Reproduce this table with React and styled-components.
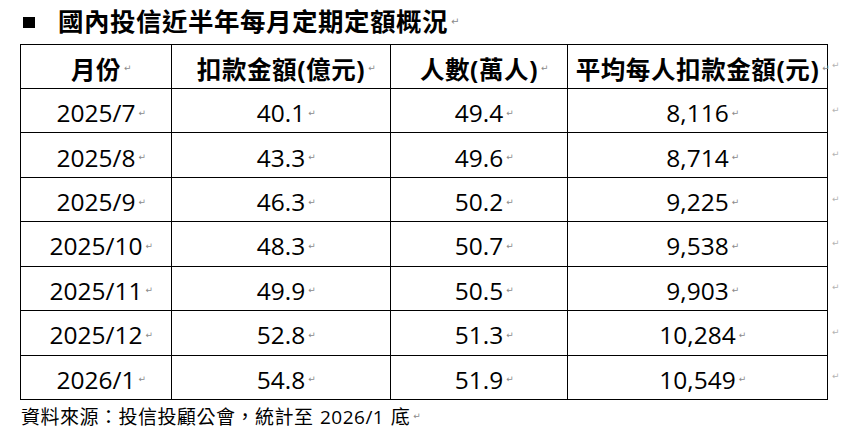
import React from 'react';
import styled, { createGlobalStyle } from 'styled-components';

const GlobalStyle = createGlobalStyle`
  html, body {
    margin: 0;
    padding: 0;
    background: #fff;
  }
  body {
    font-family: "Open Sans", "Noto Sans CJK TC", sans-serif;
    color: #000;
  }
`;

const Page = styled.div`
  width: 856px;
  height: 433px;
  overflow: hidden;
  background: #fff;
  display: flex;
  flex-direction: column;
`;

const Title = styled.h1`
  margin: 0;
  height: 44px;
  display: flex;
  align-items: center;
  padding-left: 23px;
  font-size: 25.5px;
  font-weight: 700;
  letter-spacing: 0.5px;
  line-height: 1;
`;

const Square = styled.span`
  width: 12px;
  height: 11px;
  background: #000;
  margin-right: 23px;
  flex: none;
`;

const Mark = styled.span`
  display: inline-block;
  font-family: "DejaVu Sans", sans-serif;
  font-size: ${(p) => p.$size || 9}px;
  font-weight: 400;
  letter-spacing: 0;
  color: ${(p) => (p.$light ? '#b4b4b4' : '#8a8a8a')};
  margin-left: 3px;
  width: 8px;
  margin-right: ${(p) => (p.$flow ? 0 : -11)}px;
`;

const Grid = styled.div`
  margin-left: 20px;
  display: grid;
  grid-template-columns: 152px 219px 177px 260px 28px;
  grid-template-rows: 45px repeat(7, 44.43px);
`;

const Cell = styled.div`
  box-sizing: border-box;
  display: flex;
  align-items: center;
  justify-content: center;
  padding-top: ${(p) => (p.$head ? 3 : 4)}px;
  border-right: 1px solid #000;
  border-bottom: 1px solid #000;
  border-left: ${(p) => (p.$first ? '1px solid #000' : 'none')};
  border-top: ${(p) => (p.$head ? '1px solid #000' : 'none')};
  font-size: 24.5px;
  font-weight: ${(p) => (p.$head ? 700 : 400)};
  letter-spacing: ${(p) => (p.$head ? '0.6px' : '0')};
  white-space: nowrap;
`;

const RowEnd = styled.div`
  display: flex;
  align-items: center;
  padding-left: 1px;
  padding-bottom: 3px;
`;

const Footer = styled.div`
  height: 33px;
  display: flex;
  align-items: center;
  padding-left: 21px;
  font-size: 19px;
  letter-spacing: 0.5px;
  word-spacing: 1px;
  white-space: pre;
`;

const headers = ['月份', '扣款金額(億元)', '人數(萬人)', '平均每人扣款金額(元)'];

const rows = [
  ['2025/7', '40.1', '49.4', '8,116'],
  ['2025/8', '43.3', '49.6', '8,714'],
  ['2025/9', '46.3', '50.2', '9,225'],
  ['2025/10', '48.3', '50.7', '9,538'],
  ['2025/11', '49.9', '50.5', '9,903'],
  ['2025/12', '52.8', '51.3', '10,284'],
  ['2026/1', '54.8', '51.9', '10,549'],
];

function Row({ cells, head }) {
  return (
    <>
      {cells.map((c, i) => (
        <Cell key={i} $head={head} $first={i === 0}>
          {c}
          <Mark>↵</Mark>
        </Cell>
      ))}
      <RowEnd>
        <Mark $light $flow>↵</Mark>
      </RowEnd>
    </>
  );
}

export default function App() {
  return (
    <Page>
      <GlobalStyle />
      <Title>
        <Square />
        國內投信近半年每月定期定額概況
        <Mark $flow $size={10}>↵</Mark>
      </Title>
      <Grid>
        <Row cells={headers} head />
        {rows.map((r) => (
          <Row key={r[0]} cells={r} />
        ))}
      </Grid>
      <Footer>
        資料來源：投信投顧公會，統計至 2026/1 底
        <Mark $flow>↵</Mark>
      </Footer>
    </Page>
  );
}
